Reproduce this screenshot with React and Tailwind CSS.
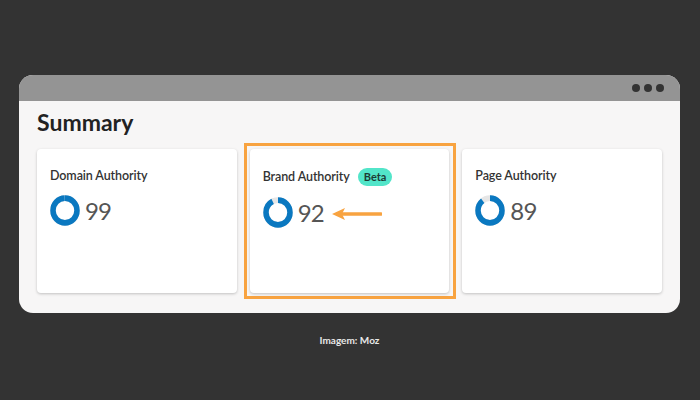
const cards = [
  { id: "da", title: "Domain Authority", score: 99 },
  { id: "ba", title: "Brand Authority", score: 92, beta: true, highlight: true },
  { id: "pa", title: "Page Authority", score: 89 },
];

const Donut = ({ value }) => {
  const r = 12;
  const c = 2 * Math.PI * r;
  return (
    <svg width="30" height="31" viewBox="0 0 30 30" preserveAspectRatio="none" className="shrink-0">
      <circle cx="15" cy="15" r={r} fill="none" stroke="#e6e6e6" strokeWidth="5.5" />
      <circle
        cx="15"
        cy="15"
        r={r}
        fill="none"
        stroke="#0a78c0"
        strokeWidth="5.5"
        strokeDasharray={`${(c * value) / 100} ${c}`}
        transform="rotate(-90 15 15)"
      />
    </svg>
  );
};

const Arrow = () => (
  <svg width="50" height="14" viewBox="0 0 50 14" className="ml-[8px] mt-[2px]">
    <line x1="8" y1="7" x2="49" y2="7" stroke="#f8a340" strokeWidth="3.5" strokeLinecap="round" />
    <path d="M0 7 L13 1 L10 7 L13 13 Z" fill="#f8a340" />
  </svg>
);

export default function App() {
  return (
    <div className="w-[700px] h-[400px] bg-[#333333] flex flex-col items-start pt-[75px] pl-[19px]" style={{ fontFamily: "Lato, 'Open Sans', sans-serif" }}>
      {/* Window */}
      <div className="w-[661px] h-[238px] rounded-[14px] overflow-hidden flex flex-col bg-[#f7f6f6]">
        <div className="h-[26px] bg-[#949494] flex items-center justify-end gap-[4px] pr-[16px] shrink-0">
          <span className="w-[8px] h-[8px] rounded-full bg-[#333333]" />
          <span className="w-[8px] h-[8px] rounded-full bg-[#333333]" />
          <span className="w-[8px] h-[8px] rounded-full bg-[#333333]" />
        </div>
        <div className="px-[18px] pt-[7px]">
          <h1 className="text-[23px] leading-[28px] font-bold text-[#222]">Summary</h1>
          <div className="grid grid-cols-3 gap-[13px] mt-[13px]">
            {cards.map((card) => (
              <div key={card.id} className="relative">
                {card.highlight && (
                  <span className="absolute -left-[6px] -right-[7px] -top-[6px] -bottom-[6px] border-[3px] border-[#f8a340]" />
                )}
                <div className="relative h-[144px] bg-white rounded-[4px] shadow-[0_1px_3px_rgba(0,0,0,0.22)] px-[13px] pt-[19px]">
                  <div className="flex items-center gap-[8px]">
                    <span className="text-[12.5px] leading-[16px] font-semibold text-[#333] tracking-[-0.1px]">{card.title}</span>
                    {card.beta && (
                      <span className="h-[18px] px-[6px] rounded-full bg-[#52e5c9] text-[#1d3b35] text-[11px] font-bold flex items-center">Beta</span>
                    )}
                  </div>
                  <div className="flex items-center mt-[11px]">
                    <Donut value={card.score} />
                    <span className="ml-[5px] text-[24px] leading-[30px] text-[#555] tracking-[-0.8px]">{card.score}</span>
                    {card.highlight && <Arrow />}
                  </div>
                </div>
              </div>
            ))}
          </div>
        </div>
      </div>
      <div className="w-[661px] mt-[20px] text-center text-[10px] font-bold text-[#e8e8e8]">Imagem: Moz</div>
    </div>
  );
}
